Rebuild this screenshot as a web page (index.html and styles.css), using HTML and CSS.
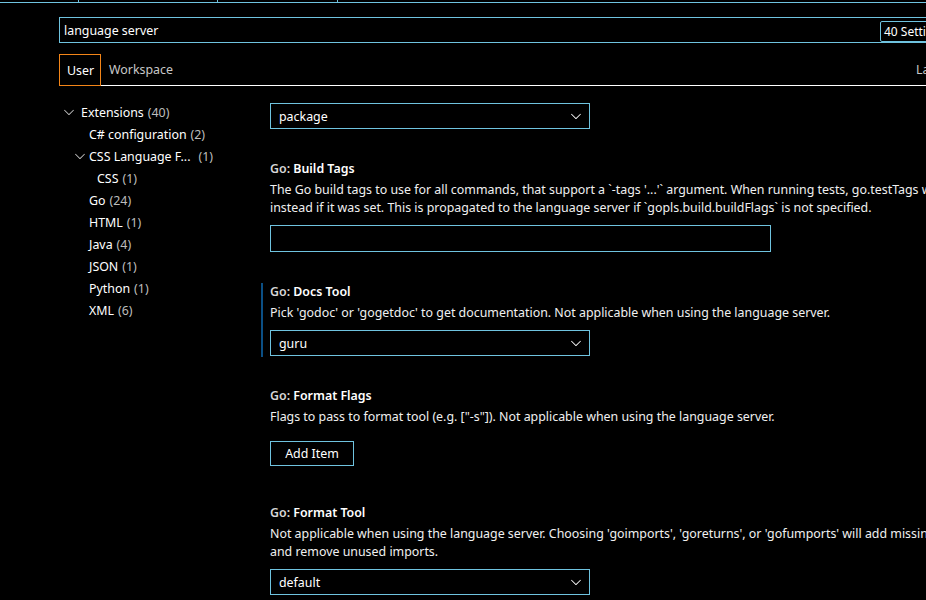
FILE: index.html
```html
<!DOCTYPE html>
<html lang="en">

<head>
  <meta charset="UTF-8" />
  <title>Settings</title>
  <link rel="stylesheet" href="styles.css">
</head>

<body>
  <div class="editor-tabs">
    <div class="etab etab-a"></div>
    <div class="etab etab-b"></div>
    <div class="etab etab-c"></div>
  </div>

  <div class="header">
    <div class="search">
      <span class="search-text">language server</span>
      <span class="count-badge">40 Settings Found</span>
    </div>
    <div class="scope-tabs">
      <div class="scope-tab active">User</div>
      <div class="scope-tab">Workspace</div>
      <div class="scope-extra">Last synced: Just now</div>
    </div>
  </div>

  <div class="main">
    <div class="toc">
      <div class="row lvl0"><span class="twistie"><svg viewBox="0 0 16 16"><path d="M7.976 10.072l4.357-4.357.62.618L8.284 11h-.618L3 6.333l.619-.618 4.357 4.357z" /></svg></span><span class="label">Extensions</span><span class="count">(40)</span></div>
      <div class="row lvl1">
        <span class="label">C# configuration</span><span class="count">(2)</span>
      </div>
      <div class="row lvl1-twist"><span class="twistie"><svg viewBox="0 0 16 16"><path d="M7.976 10.072l4.357-4.357.62.618L8.284 11h-.618L3 6.333l.619-.618 4.357 4.357z" /></svg></span><span class="label">CSS Language F...</span><span class="count wide">(1)</span></div>
      <div class="row lvl2">
        <span class="label">CSS</span><span class="count">(1)</span>
      </div>
      <div class="row lvl1"><span class="label">Go</span><span class="count">(24)</span></div>
      <div class="row lvl1"><span class="label">HTML</span><span class="count">(1)</span></div>
      <div class="row lvl1"><span class="label">Java</span><span class="count">(4)</span></div>
      <div class="row lvl1"><span class="label">JSON</span><span class="count">(1)</span></div>
      <div class="row lvl1"><span class="label">Python</span><span class="count">(1)</span></div>
      <div class="row lvl1"><span class="label">XML</span><span class="count">(6)</span></div>
    </div>

    <div class="settings">
      <div class="setting">
        <div class="select">
          <span>package</span>
          <svg class="chev" viewBox="0 0 16 16"><path d="M7.976 10.072l4.357-4.357.62.618L8.284 11h-.618L3 6.333l.619-.618 4.357 4.357z" /></svg>
        </div>
      </div>

      <div class="setting">
        <div class="title"><span class="cat">Go: </span>Build Tags</div>
        <div class="desc">The Go build tags to use for all commands, that support a `-tags '...'` argument. When running tests, go.testTags will be used<br>instead if it was set. This is propagated to the language server if `gopls.build.buildFlags` is not specified.</div>
        <div class="text-input"></div>
      </div>

      <div class="setting focused">
        <div class="title"><span class="cat">Go: </span>Docs Tool</div>
        <div class="desc">Pick 'godoc' or 'gogetdoc' to get documentation. Not applicable when using the language server.</div>
        <div class="select">
          <span>guru</span>
          <svg class="chev" viewBox="0 0 16 16"><path d="M7.976 10.072l4.357-4.357.62.618L8.284 11h-.618L3 6.333l.619-.618 4.357 4.357z" /></svg>
        </div>
      </div>

      <div class="setting list">
        <div class="title"><span class="cat">Go: </span>Format Flags</div>
        <div class="desc">Flags to pass to format tool (e.g. ["-s"]). Not applicable when using the language server.</div>
        <button class="add-item">Add Item</button>
      </div>

      <div class="setting">
        <div class="title"><span class="cat">Go: </span>Format Tool</div>
        <div class="desc">Not applicable when using the language server. Choosing 'goimports', 'goreturns', or 'gofumports' will add missing imports<br>and remove unused imports.</div>
        <div class="select">
          <span>default</span>
          <svg class="chev" viewBox="0 0 16 16"><path d="M7.976 10.072l4.357-4.357.62.618L8.284 11h-.618L3 6.333l.619-.618 4.357 4.357z" /></svg>
        </div>
      </div>
    </div>
  </div>
</body>

</html>
```

FILE: styles.css
```css
:root {
  --contrast-border: #6fc3df;
  --active-border: #f38518;
  --font-color-base: #ffffff;
  --font-color-dim: #c8c8c8;
  --font-size-base: 12.4px;
}

body {
  font-family: 'Noto Sans', sans-serif;
  font-size: var(--font-size-base);
  color: var(--font-color-base);
  background-color: #000;
  margin: 0;
  width: 926px;
  height: 600px;
  overflow: hidden;
}

/* bottom edge of the editor tab strip */
.editor-tabs {
  display: flex;
  height: 2px;
  border-bottom: 1px solid var(--contrast-border);
}

.etab {
  border-right: 1px solid var(--contrast-border);
}

.etab-a { width: 78px; }
.etab-b { width: 138px; }
.etab-c { width: 119px; }

.header {
  padding: 14px 0 0 59px;
}

.search {
  position: relative;
  width: 1000px;
  height: 26px;
  box-sizing: border-box;
  border: 1px solid var(--contrast-border);
  display: flex;
  align-items: center;
  padding: 1px 0 0 4px;
}

.search-text {
  line-height: 18px;
}

.count-badge {
  position: absolute;
  left: 820px;
  top: 3px;
  height: 21px;
  box-sizing: border-box;
  border: 1px solid var(--contrast-border);
  border-radius: 2px;
  padding: 0 3px;
  font-size: 12px;
  line-height: 19px;
  white-space: nowrap;
}

.scope-tabs {
  display: grid;
  grid-template-columns: 42px 815px auto;
  margin-top: 11px;
  height: 31px;
  border-bottom: 1px solid #fff;
  width: 1000px;
}

.scope-tab {
  line-height: 30px;
  padding: 1px 0 0 8px;
  color: var(--font-color-dim);
  white-space: nowrap;
}

.scope-tab.active {
  color: #fff;
  height: 32px;
  box-sizing: border-box;
  border: 1px solid var(--active-border);
  padding: 1px 0 0 7px;
  line-height: 29px;
}

.scope-extra {
  line-height: 30px;
  padding-top: 1px;
  color: var(--font-color-dim);
  white-space: nowrap;
}

.main {
  display: flex;
}

.toc {
  width: 261px;
  flex: none;
  padding-top: 15px;
}

.row {
  display: flex;
  align-items: center;
  height: 22px;
  white-space: nowrap;
}

.lvl0 { padding-left: 61px; }
.lvl1 { padding-left: 89px; }
.lvl1-twist { padding-left: 72px; }
.lvl2 { padding-left: 97px; }

.twistie {
  width: 16px;
  height: 16px;
  margin-right: 1px;
}

.lvl0 .twistie {
  margin-right: 4px;
}

.twistie svg {
  width: 16px;
  height: 16px;
  fill: #c5c5c5;
  display: block;
}

.count {
  color: #bdbdbd;
  margin-left: 4px;
}

.count.wide {
  margin-left: 8px;
}

.settings {
  flex: 1;
  padding-top: 17px;
}

.setting {
  border-left: 2px solid transparent;
  padding: 0 0 1px 7px;
  margin-bottom: 31px;
}

.setting.focused {
  border-left-color: #0b4f84;
  padding-top: 1px;
  margin-top: -1px;
}

.setting.list {
  margin-bottom: 38px;
}

.title {
  font-weight: 600;
  line-height: 14px;
  padding-top: 1px;
  white-space: nowrap;
}

.cat {
  color: #d6d6d6;
}

.desc {
  margin-top: 4px;
  padding-top: 1px;
  line-height: 18px;
  color: #f0f0f0;
  white-space: nowrap;
}

.select {
  width: 320px;
  height: 26px;
  box-sizing: border-box;
  border: 1px solid var(--contrast-border);
  margin-top: 8px;
  display: flex;
  align-items: center;
  justify-content: space-between;
  padding: 1px 5px 0 8px;
}

.setting:first-child .select {
  margin-top: 0;
}

.chev {
  width: 16px;
  height: 16px;
  fill: #fff;
  margin-top: -1px;
}

.text-input {
  width: 501px;
  height: 27px;
  box-sizing: border-box;
  border: 1px solid var(--contrast-border);
  margin-top: 8px;
}

.add-item {
  display: block;
  margin-top: 15px;
  width: 84px;
  height: 25px;
  box-sizing: border-box;
  border: 1px solid var(--contrast-border);
  background-color: #000;
  color: #fff;
  font-family: inherit;
  font-size: var(--font-size-base);
  padding: 0;
}
```
